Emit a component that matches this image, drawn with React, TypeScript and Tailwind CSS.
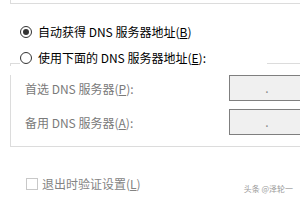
import React from "react";

function Radio({ checked }: { checked?: boolean }) {
	return (
		<span className="flex h-[12px] w-[12px] shrink-0 items-center justify-center rounded-full border border-[#333333] bg-white">
			{checked && <span className="h-[6px] w-[6px] rounded-full bg-[#333333]" />}
		</span>
	);
}

// only the first octet separator falls inside the visible area
function IpBox() {
	return (
		<div className="flex h-[26px] w-[152px] shrink-0 items-center border border-[#7f7f7f] bg-[#f0f0f0] text-[#8a8a8a]">
			<span className="w-[35px] shrink-0" />
			<span className="w-[4px] text-center leading-none">.</span>
		</div>
	);
}

export default function App() {
	return (
		<div
			className="relative h-[200px] w-[300px] overflow-hidden bg-white text-[12px] leading-[17px] text-black"
			style={{ fontFamily: '"Noto Sans CJK SC", "Noto Sans", sans-serif' }}
		>
			{/* end of the group above */}
			<div className="ml-[10px] h-[4px] border-b border-l border-[#dcdcdc]" />

			<div className="mt-[19px] flex h-[17px] items-center pl-[20px]">
				<Radio checked />
				<span className="ml-[6px] whitespace-nowrap">
					自动获得 DNS 服务器地址(<u>B</u>)
				</span>
			</div>

			{/* group header */}
			<div className="mt-[9px] flex h-[17px]">
				<div className="ml-[10px] mt-[14px] w-[10px] self-stretch border-l border-t border-[#dcdcdc]" />
				<div className="flex items-center">
					<Radio />
					<span className="ml-[6px] whitespace-nowrap">
						使用下面的 DNS 服务器地址(<u>E</u>):
					</span>
				</div>
				<div className="ml-auto mt-[14px] w-[33px] border-t border-[#dcdcdc]" />
			</div>

			{/* group body */}
			<div className="ml-[10px] border-b border-l border-[#dcdcdc] pb-[11px] pl-[14px] text-[#7a7a7a]">
				<div className="mt-[9px] flex items-center">
					<span className="w-[204px] shrink-0 whitespace-nowrap">
						首选 DNS 服务器(<u>P</u>):
					</span>
					<IpBox />
				</div>
				<div className="mt-[8px] flex items-center">
					<span className="w-[204px] shrink-0 whitespace-nowrap">
						备用 DNS 服务器(<u>A</u>):
					</span>
					<IpBox />
				</div>
			</div>

			<div className="mt-[28px] flex h-[17px] items-center pl-[26px] text-[#838383]">
				<span className="h-[12px] w-[12px] shrink-0 border border-[#c8c8c8] bg-white" />
				<span className="ml-[4px] whitespace-nowrap">
					退出时验证设置(<u>L</u>)
				</span>
			</div>

			<div className="absolute bottom-[6px] right-[7px] text-[8px] leading-[10px] text-[#9a9a9a]">
				头条 @泽轮一
			</div>
		</div>
	);
}
